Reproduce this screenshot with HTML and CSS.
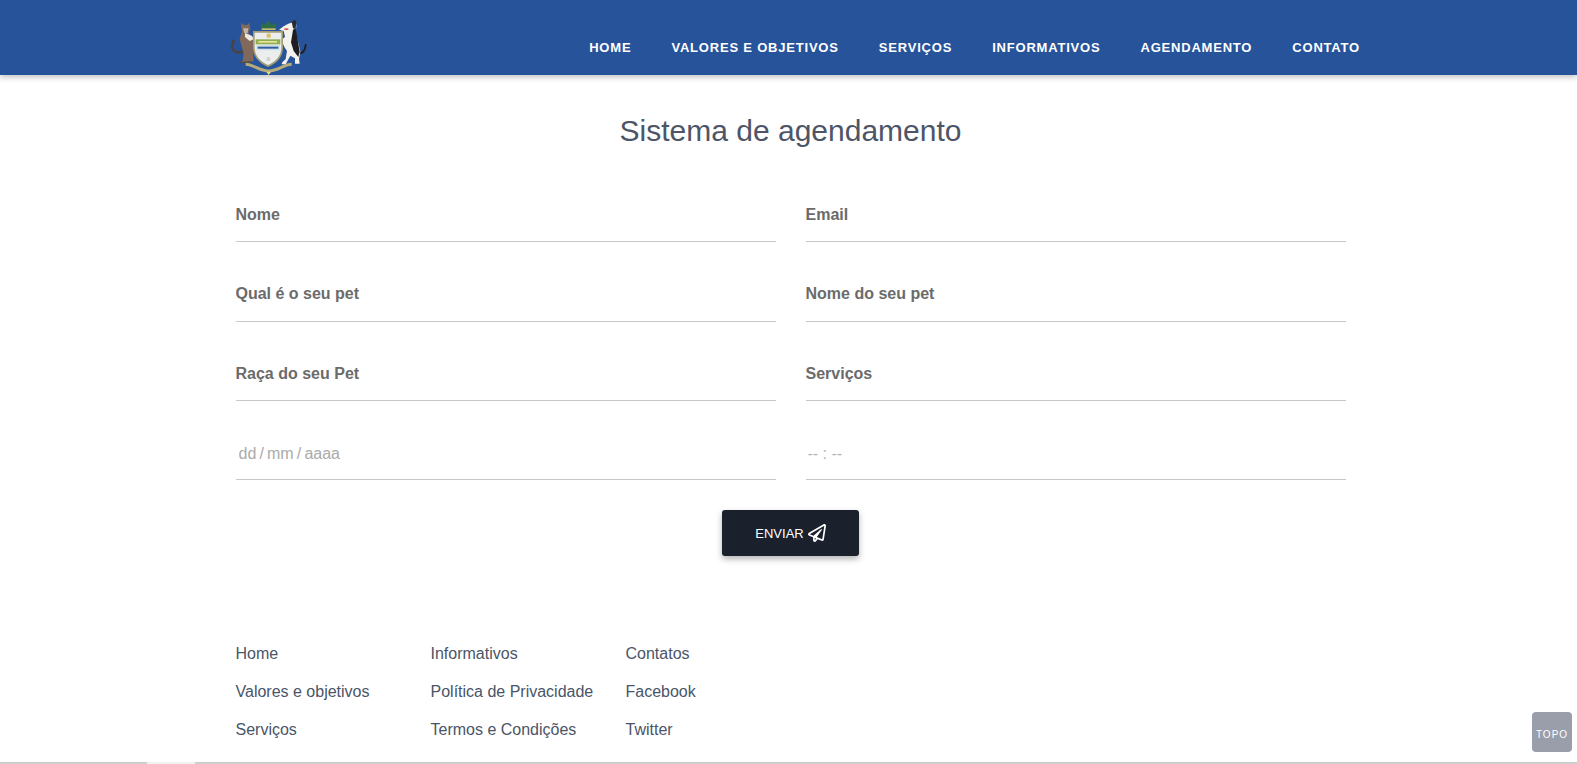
FILE: index.html
```html
<!DOCTYPE html>
<html lang="pt-BR">
<head>
  <meta charset="UTF-8" />
  <meta name="viewport" content="width=device-width, initial-scale=1.0"/>
  <title>Sistema de agendamento</title>
  <link rel="stylesheet" href="styles.css">
</head>
<body>

  <!-- Header -->
  <header class="topbar">
    <div class="topbar-inner">
      <a href="#" class="logo">
        <svg width="84" height="60" viewBox="80 55 252 180" xmlns="http://www.w3.org/2000/svg">
          <!-- cat tail -->
          <path d="M126 156c-12 6-26 0-30-10-2-7 0-14 4-22" fill="none" stroke="#4a4440" stroke-width="8" stroke-linecap="round"/>
          <!-- cat -->
          <path d="M124 70l8 6h8l7-7 3 18-6 12 16 20-2 8 0 26 2 32-34 2 4-24-8-30-4-16 8-24-4-12z" fill="#80695a"/>
          <path d="M128 86h16l-2 14h-10z" fill="#c0b5a8"/>
          <path d="M134 100l20 8 8 10-14 6-14-12z" fill="#efeadf"/>
          <path d="M118 186h34v4h-34z" fill="#5c4a3e"/>
          <!-- dog tail -->
          <path d="M296 160c10 2 18-6 20-24" fill="none" stroke="#202024" stroke-width="6" stroke-linecap="round"/>
          <!-- dog -->
          <path d="M250 80l14-8 14-4 8-6 2 16-2 22 8 30 6 26-4 22 2 14-14 0 0-16-14-8-14 26-12 0 2-6 10-10 4-24-8-12-6-14 0-10 8-6-4-18-14-4z" fill="#f4f2ec"/>
          <path d="M278 90l8-4 6 34 6 36-4 16-14-18-8-26z" fill="#1d1d22"/>
          <path d="M274 66l10-6 4 4-2 24-8-2z" fill="#2a2a2e"/>
          <path d="M252 86h12v5h-12z" fill="#d9574a"/>
          <!-- crown -->
          <path d="M182 68l12 8 10-14 10 14 14-8-2 22h-42z" fill="#2f6d48"/>
          <path d="M184 86h42v5h-42z" fill="#c9b878"/>
          <!-- ribbon -->
          <path d="M136 194c24 0 40 20 69 20s45-20 69-20" fill="none" stroke="#b5aa7c" stroke-width="9"/>
          <path d="M198 216h14l-7 10z" fill="#eadb8c"/>
          <!-- shield -->
          <path d="M158 94h90v50c0 30-22 48-45 58-23-10-45-28-45-58z" fill="#a09c78"/>
          <path d="M163 99h80v45c0 26-19 43-40 52-21-9-40-26-40-52z" fill="#eceeee"/>
          <path d="M166 119h74v15h-74z" fill="#8fae4c"/>
          <path d="M168 136h70v16h-70z" fill="#d3e0ec"/>
          <path d="M174 124h56v5h-56z" fill="#e9e2a0"/>
          <path d="M172 141h62v6h-62z" fill="#2f5f9f"/>
          <circle cx="205" cy="108" r="7" fill="#d8c46a"/>
          <circle cx="204" cy="178" r="6" fill="#d0d0c4"/>
        </svg>
      </a>
      <nav class="menu">
        <a href="#">Home</a>
        <a href="#">Valores e objetivos</a>
        <a href="#">Serviços</a>
        <a href="#">Informativos</a>
        <a href="#">Agendamento</a>
        <a href="#">Contato</a>
      </nav>
    </div>
  </header>

  <!-- Agendamento -->
  <main class="container">
    <h1>Sistema de agendamento</h1>
    <form class="form-grid">
      <input type="text" placeholder="Nome" />
      <input type="text" placeholder="Email" />
      <input type="text" class="row-two" placeholder="Qual é o seu pet" />
      <input type="text" class="row-two" placeholder="Nome do seu pet" />
      <input type="text" placeholder="Raça do seu Pet" />
      <input type="text" placeholder="Serviços" />
      <input type="text" class="date-field" placeholder="dd / mm / aaaa" />
      <input type="text" class="time-field" placeholder="-- : --" />
      <div class="form-actions">
        <button type="submit">ENVIAR
          <svg width="18" height="18" viewBox="0 0 512 512" xmlns="http://www.w3.org/2000/svg">
            <path fill="#fff" d="M440 6.5L24 246.4c-34.4 19.9-31.1 70.8 5.7 85.9L144 379.6V464c0 46.4 59.2 65.5 86.6 28.6l43.8-59.1 111.9 46.2c5.9 2.4 12.1 3.6 18.3 3.6 8.2 0 16.3-2.1 23.6-6.2 12.8-7.2 21.6-20 23.9-34.5l59.4-387.2c6.1-40.1-36.9-68.8-71.5-48.9zM192 464v-64.6l36.6 15.1L192 464zm212.6-28.7l-153.8-63.5L391 169.5c10.7-15.5-9.5-33.5-23.7-21.2L155.8 332.6 48 288 464 48l-59.4 387.3z"/>
          </svg>
        </button>
      </div>
    </form>
  </main>

  <!-- Footer -->
  <footer class="container footer">
    <ul>
      <li><a href="#">Home</a></li>
      <li><a href="#">Valores e objetivos</a></li>
      <li><a href="#">Serviços</a></li>
    </ul>
    <ul>
      <li><a href="#">Informativos</a></li>
      <li><a href="#">Política de Privacidade</a></li>
      <li><a href="#">Termos e Condições</a></li>
    </ul>
    <ul>
      <li><a href="#">Contatos</a></li>
      <li><a href="#">Facebook</a></li>
      <li><a href="#">Twitter</a></li>
    </ul>
  </footer>

  <a href="#" class="to-top">TOPO</a>
  <div class="scroll-track"><div class="scroll-thumb"></div></div>

</body>
</html>
```

FILE: styles.css
```css
* {
  box-sizing: border-box;
}
html, body {
  height: 100%;
}
body {
  margin: 0;
  font-family: "Liberation Sans", Arial, sans-serif;
  background: #fff;
  color: #4a5568;
  overflow: hidden;
}
a {
  color: inherit;
  text-decoration: none;
}
.topbar {
  background: #27539b;
  height: 75px;
  box-shadow: 0 2px 6px rgba(0,0,0,0.25);
}
.topbar-inner {
  width: 1140px;
  margin-left: 220px;
  padding-left: 7px;
  display: flex;
  justify-content: space-between;
  height: 75px;
}
.logo {
  display: block;
  padding-top: 18px;
  height: 78px;
}
.menu {
  display: flex;
  gap: 40px;
  padding-top: 39px;
}
.menu a {
  color: #fff;
  font-size: 13px;
  font-weight: bold;
  letter-spacing: 0.8px;
  line-height: 17px;
  text-transform: uppercase;
}
.container {
  width: 1110px;
  margin-left: 235.5px;
}
h1 {
  margin: 36px 0 0;
  font-size: 30px;
  font-weight: normal;
  line-height: 40px;
  text-align: center;
  color: #4d5567;
}
.form-grid {
  display: grid;
  grid-template-columns: 540px 540px;
  column-gap: 30px;
  margin-top: 44px;
}
.form-grid input {
  width: 100%;
  height: 47px;
  margin-top: 32px;
  padding: 0 0 6px;
  border: none;
  border-bottom: 1px solid #c8c8c8;
  font-family: inherit;
  font-size: 16px;
  font-weight: bold;
  outline: none;
}
.form-grid input:nth-child(-n+2) {
  margin-top: 0;
}
.form-grid .row-two {
  margin-top: 33px;
  padding-bottom: 8px;
}
.form-grid input::placeholder {
  color: #6b6b6b;
  opacity: 1;
}
.form-grid .date-field, .form-grid .time-field {
  font-weight: normal;
  padding: 0 0 4px 3px;
}
.form-grid .date-field {
  word-spacing: -1.3px;
}
.form-grid .time-field {
  padding-left: 2px;
}
.form-grid .date-field::placeholder {
  color: #aaa;
}
.form-grid .time-field::placeholder {
  color: #b4b4b4;
}
.form-actions {
  grid-column: 1 / 3;
  display: flex;
  justify-content: center;
  margin-top: 30px;
}
button {
  width: 137px;
  height: 46px;
  background: #1a202c;
  color: #fff;
  border: none;
  border-radius: 3px;
  box-shadow: 0 3px 6px rgba(0,0,0,0.3);
  font-family: inherit;
  font-size: 13px;
  display: flex;
  align-items: center;
  justify-content: center;
  gap: 4px;
  cursor: pointer;
}
.footer {
  display: flex;
  margin-top: 79px;
}
.footer ul {
  list-style: none;
  margin: 0;
  padding: 0;
  width: 195px;
}
.footer li {
  font-size: 16px;
  line-height: 38px;
}
.to-top {
  position: fixed;
  right: 5px;
  bottom: 12px;
  width: 40px;
  height: 40px;
  background: #9a9eab;
  border-radius: 4px;
  color: #fff;
  font-size: 10px;
  letter-spacing: 1px;
  line-height: 40px;
  text-align: center;
  padding-top: 3px;
}
.scroll-track {
  position: fixed;
  left: 0;
  right: 0;
  bottom: 0;
  height: 2px;
  background: #cdcdcd;
}
.scroll-thumb {
  width: 48px;
  height: 2px;
  margin-left: 147px;
  background: #f1f1f1;
}
```
